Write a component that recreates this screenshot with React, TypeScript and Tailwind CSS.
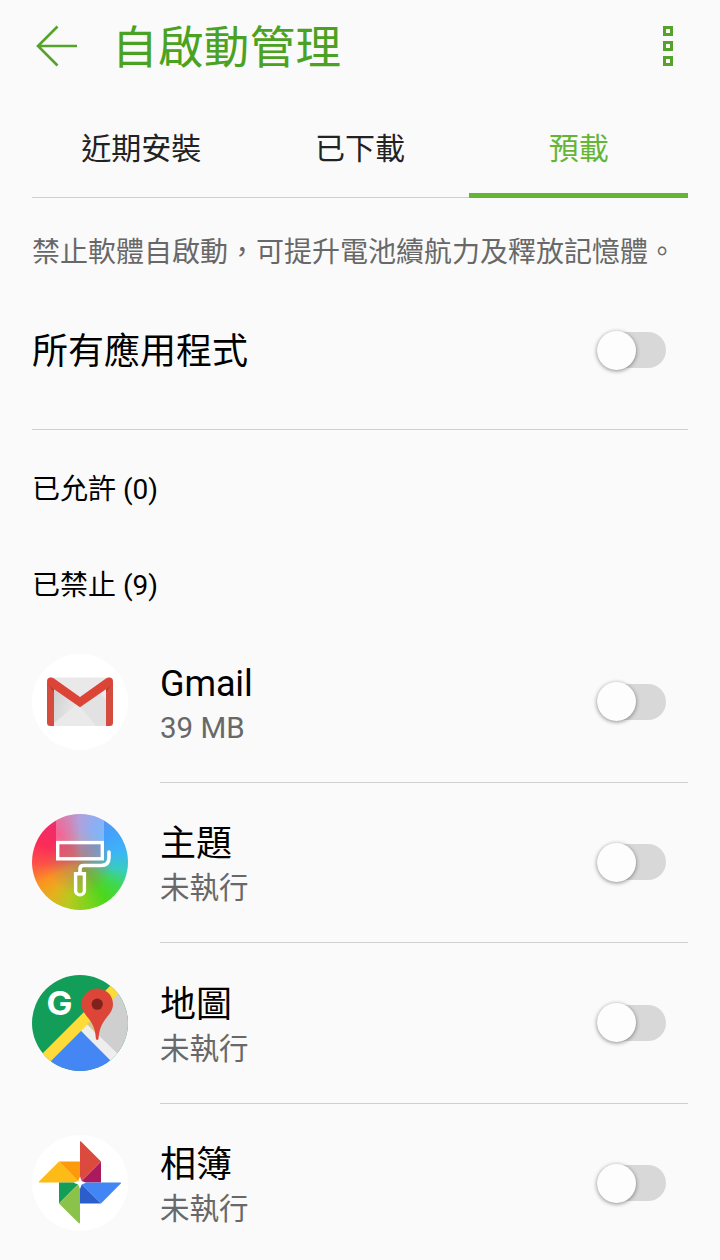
import { useState } from 'react'
import type { ReactNode } from 'react'
import clsx from 'clsx'

type AppItem = {
  name: string
  detail: string
  icon: ReactNode
}

const GmailIcon = () => (
  <svg viewBox="0 0 96 96" className="h-full w-full">
    <defs>
      <linearGradient id="mailShade" x1="0" y1="0" x2="1" y2="0.4">
        <stop offset="0" stopColor="#d0d0d0" />
        <stop offset="1" stopColor="#ebebeb" />
      </linearGradient>
    </defs>
    <circle cx="48" cy="48" r="48" fill="#fff" />
    <rect x="15" y="23.5" width="66" height="48.5" rx="3.5" fill="#e9e9e9" />
    <path d="M22 35 48 53 74 35 74 72H22Z" fill="#ececec" />
    <path d="M22 35 22 70 48 53Z" fill="url(#mailShade)" />
    <path d="M48 53 67 38 74 46V72H64Z" fill="#e2e2e2" />
    <path d="M22 69 43 52 48 53 62 72H22Z" fill="#eaeaea" />
    <path d="M22 36V72H18.5A3.5 3.5 0 0 1 15 68.5V28L22 31Z" fill="#d54b3d" />
    <path d="M74 36V72H77.5A3.5 3.5 0 0 0 81 68.5V28L74 31Z" fill="#d54b3d" />
    <path d="M15 27.5A4 4 0 0 1 19 23.5Q20.5 23.5 22 24.5L48 43 74 24.5Q75.5 23.5 77 23.5A4 4 0 0 1 81 27.5Q81 30 79 31.8L48 53.2 17 31.8Q15 30 15 27.5Z" fill="#dc4438" />
    <path d="M15.5 30Q16 31 17 31.8L22 35.2V38ZM80.5 30Q80 31 79 31.8L74 35.2V38Z" fill="#b63931" />
  </svg>
)

const ThemeIcon = () => (
  <div className="h-full w-full overflow-hidden rounded-full bg-[radial-gradient(circle,rgba(178,128,100,0.95)_0%,rgba(178,128,100,0.55)_18%,rgba(178,128,100,0)_50%),conic-gradient(from_0deg,#8f7fd0_0deg,#6090f0_22deg,#45a0fa_45deg,#3cb4f8_75deg,#38ccc0_100deg,#3fd850_122deg,#4cd71c_145deg,#82d21e_170deg,#b5ca1e_195deg,#e5b01e_220deg,#fb9420_242deg,#fd5048_268deg,#fb2c58_295deg,#ee2c6c_325deg,#c0569c_345deg,#8f7fd0_360deg)]">
    <svg viewBox="0 0 96 96" className="h-full w-full">
      <rect x="24" y="0" width="48" height="28" fill="#fff" fillOpacity="0.28" />
      <rect x="25.7" y="28.6" width="44.6" height="16.2" fill="#d88aa0" fillOpacity="0.25" stroke="#fff" strokeWidth="3.4" />
      <path d="M77 38V43.5Q77 51.5 69 51.5H51.5Q48 51.5 48 55V59" fill="none" stroke="#fff" strokeWidth="3.6" strokeLinecap="round" />
      <path d="M43.6 59.7H52.4V76.5A4.4 4.4 0 0 1 43.6 76.5Z" fill="none" stroke="#fff" strokeWidth="3.4" />
    </svg>
  </div>
)

const MapsIcon = () => (
  <svg viewBox="0 0 96 96" className="h-full w-full">
    <defs>
      <clipPath id="mapCircle">
        <circle cx="48" cy="48" r="48" />
      </clipPath>
    </defs>
    <g clipPath="url(#mapCircle)">
      <rect width="96" height="96" fill="#129d58" />
      <path d="M83 20 96 8V96H80L50 50Z" fill="#cfcfcf" />
      <path d="M48 55 54.5 48.5 92 85 80 90Z" fill="#eeeeee" />
      <path d="M48 55 81 88V96H7Z" fill="#4486f4" />
      <path d="M6 83 84 5 94 11 11 94Z" fill="#fddc3a" />
      <path d="M55 49 61 44 65 60Z" fill="#d9c04a" fillOpacity="0.5" />
    </g>
    <text x="14.5" y="39.7" fontSize="33" fontWeight="700" fill="#fff" textLength="26" lengthAdjust="spacingAndGlyphs" className="font-[Inter,sans-serif]">G</text>
    <path d="M65.3 13.5C56.5 13.5 49.5 20.5 49.5 29C49.5 35 53 39 57 44C61.5 50 63.5 56 63.8 63Q64 65 65.2 65T66.6 63C67 56 69 50 73.5 44C77.5 39 81 35 81 29C81 20.5 74 13.5 65.3 13.5Z" fill="#dc4538" />
    <circle cx="65.2" cy="29.2" r="5.6" fill="#7e231c" />
  </svg>
)

const PhotosIcon = () => (
  <svg viewBox="0 0 96 96" className="h-full w-full">
    <circle cx="48" cy="48" r="48" fill="#fff" />
    <path d="M27 26.5H48V48Z" fill="#fd9a0c" />
    <path d="M27 26.5 48 47.5H7Q6.5 47 7 46.5Z" fill="#fdbb17" />
    <path d="M69 26.5V47.5H48Z" fill="#ab1a5c" />
    <path d="M48 6.5Q48.5 6 49 6.5L69 26.5 48 47.5Z" fill="#dc4a3e" />
    <path d="M69 68.5H48V47.5Z" fill="#2b5dcb" />
    <path d="M48 47.5H88.5Q89.3 48 88.8 48.6L69 68.5Z" fill="#4285f4" />
    <path d="M27 47.5H48L27 68.5Z" fill="#129d58" />
    <path d="M48 47.5V88Q47.5 88.8 46.8 88.3L27 68.5Z" fill="#8bc34a" />
    <path d="M48 41.5 49.7 46 54 47.7 49.7 49.5 48 54 46.3 49.5 41.5 47.7 46.3 46Z" fill="#fff" />
  </svg>
)

const apps: AppItem[] = [
  { name: 'Gmail', detail: '39 MB', icon: <GmailIcon /> },
  { name: '主題', detail: '未執行', icon: <ThemeIcon /> },
  { name: '地圖', detail: '未執行', icon: <MapsIcon /> },
  { name: '相簿', detail: '未執行', icon: <PhotosIcon /> },
]

const tabs = ['近期安裝', '已下載', '預載']

const Toggle = ({ label }: { label: string }) => {
  const [on, setOn] = useState(false)

  return (
    <button
      role="switch"
      aria-checked={on}
      aria-label={label}
      onClick={() => setOn(!on)}
      className={clsx(
        'mr-[22px] flex h-9 w-[69px] shrink-0 items-center rounded-full',
        on ? 'justify-end bg-[#a5d68a]' : 'bg-[#d8d8d8]'
      )}
    >
      <span className="size-[39px] shrink-0 rounded-full bg-[#fdfdfd] shadow-[0_1px_4px_rgba(0,0,0,0.45)]" />
    </button>
  )
}

const AppRow = ({ app }: { app: AppItem }) => (
  <li className="flex h-[160.5px] shrink-0 items-center gap-8">
    <div className="mb-px size-24 shrink-0">{app.icon}</div>
    <div className="flex h-full flex-1 items-center justify-between border-b border-[#cfcfcf]">
      <div className="pt-2">
        <p className="text-[36px] leading-[44px] tracking-[-0.1px] text-black">{app.name}</p>
        <p className="text-[29.5px] leading-[44px] text-[#686868]">{app.detail}</p>
      </div>
      <Toggle label={app.name} />
    </div>
  </li>
)

export default function App() {
  const [active, setActive] = useState(2)

  return (
    <main
      lang="zh-Hant-TW"
      className="flex h-[1260px] w-[720px] flex-col overflow-hidden bg-[#fafafa] px-8 font-[Roboto,'Noto_Sans_CJK_TC',sans-serif] text-black"
    >
      <header className="flex h-[92px] shrink-0 items-center">
        <button aria-label="返回" className="ml-1">
          <svg viewBox="0 0 42 42" className="size-[42px]" fill="none" stroke="#55a32b" strokeWidth="2.6">
            <path d="M41 21H2M21.5 1.5 2 21 21.5 40.5" />
          </svg>
        </button>
        <h1 className="ml-[34px] flex-1 pt-[5px] text-[45.5px] leading-[60px] tracking-[0.4px] text-[#4ba222]">自啟動管理</h1>
        <button aria-label="更多" className="mr-[15px] flex flex-col gap-[5px]">
          <span className="size-[10px] border-[3px] border-[#55a32b]" />
          <span className="size-[10px] border-[3px] border-[#55a32b]" />
          <span className="size-[10px] border-[3px] border-[#55a32b]" />
        </button>
      </header>

      <nav className="grid h-[106px] shrink-0 grid-cols-3">
        {tabs.map((tab, i) => (
          <button
            key={tab}
            onClick={() => setActive(i)}
            className={clsx(
              'flex flex-col items-center justify-between pt-[35px] text-[30px] leading-[44px]',
              i === active ? 'text-[#65b535]' : 'text-[#222222]'
            )}
          >
            {tab}
            <span className={clsx('w-full', i === active ? 'h-[5px] bg-[#65b535]' : 'h-px bg-[#cfcfcf]')} />
          </button>
        ))}
      </nav>

      <p className="flex h-[106px] shrink-0 items-center whitespace-nowrap pt-[3px] text-[28px] text-[#686868]">
        禁止軟體自啟動，可提升電池續航力及釋放記憶體。
      </p>

      <section className="flex h-[126px] shrink-0 items-start border-b border-[#cfcfcf]">
        <div className="flex h-[92px] w-full items-center justify-between">
          <h2 className="pt-1 text-[36px]">所有應用程式</h2>
          <Toggle label="所有應用程式" />
        </div>
      </section>

      <h3 className="flex h-[116px] shrink-0 items-center pt-1 text-[28px]">已允許 (0)</h3>
      <h3 className="flex h-[76px] shrink-0 items-center pt-[3px] text-[28px]">已禁止 (9)</h3>

      <ul className="flex flex-col">
        {apps.map((app) => (
          <AppRow key={app.name} app={app} />
        ))}
      </ul>
    </main>
  )
}
